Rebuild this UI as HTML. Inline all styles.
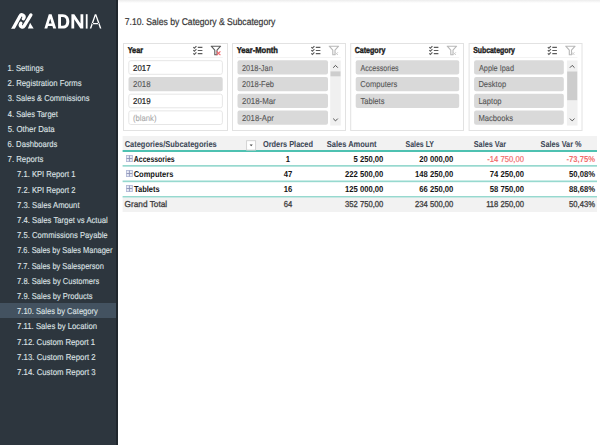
<!DOCTYPE html>
<html><head><meta charset="utf-8"><style>
html,body{margin:0;padding:0;}
body{width:600px;height:445px;overflow:hidden;background:#fff;}
svg{display:block;font-family:"Liberation Sans",sans-serif;text-rendering:geometricPrecision;}
</style></head><body>
<svg width="600" height="445" viewBox="0 0 600 445">
<defs><linearGradient id="tg" x1="0" y1="0" x2="0" y2="1"><stop offset="0" stop-color="#ececec"/><stop offset="1" stop-color="#ffffff"/></linearGradient></defs>
<rect x="118" y="0" width="482" height="3" fill="url(#tg)" />
<rect x="0" y="0" width="116" height="445" fill="#2d363e" />
<rect x="116" y="0" width="2" height="445" fill="#20272d" />
<rect x="0" y="303" width="116" height="15" fill="#435260" />
<clipPath id="lc1"><rect x="0" y="0" width="40" height="28.8"/></clipPath>
<g fill="none" stroke="#ffffff" stroke-width="3.3" stroke-linecap="round"><path clip-path="url(#lc1)" d="M11.77 31 L20.06 16.04 A2.11 2.11 0 0 1 23.76 18.08 L23.4 18.8"/><path d="M20.9 23.2 L20.53 23.92 A2.11 2.11 0 0 0 24.22 25.96 L30.9 14.95"/></g>
<path d="M30.1 22.7 L33.6 28.6 L27.9 28.6 Z" fill="#ffffff"/>
<g fill="#ffffff" fill-rule="evenodd">
<path d="M44.4 28.6 L48.8 14.2 L51.6 14.2 L56.2 28.6 L53.2 28.6 L52.4 26 L48 26 L47.3 28.6 Z M48.7 23.4 L51.6 23.4 L50.2 18.8 Z"/>
<path d="M58.1 14.2 L62.6 14.2 C66.9 14.2 69.3 17.1 69.3 21.4 C69.3 25.7 66.9 28.6 62.6 28.6 L58.1 28.6 Z M61 17 L62.6 17 C65.1 17 66.3 18.8 66.3 21.4 C66.3 24 65.1 25.8 62.6 25.8 L61 25.8 Z"/>
<path d="M71.4 28.6 L71.4 14.2 L74.3 14.2 L80.5 23.6 L80.5 14.2 L83.3 14.2 L83.3 28.6 L80.4 28.6 L74.2 19.2 L74.2 28.6 Z"/>
<rect x="85.8" y="14.2" width="1.8" height="14.4"/>
<path d="M89.8 28.6 L94.8 14.2 L96.3 14.2 L101.4 28.6 L99.9 28.6 L95.55 15.9 L91.3 28.6 Z M92.1 23 L98.9 23 L98.9 24.2 L92.1 24.2 Z"/>
</g>
<text x="7.43" y="71" font-size="8.6" fill="#dfe2e5" stroke="#dfe2e5" stroke-width="0.12" textLength="36.04" lengthAdjust="spacingAndGlyphs">1. Settings</text>
<text x="7.61" y="86" font-size="8.6" fill="#dfe2e5" stroke="#dfe2e5" stroke-width="0.12" textLength="74.05" lengthAdjust="spacingAndGlyphs">2. Registration Forms</text>
<text x="7.70" y="101" font-size="8.6" fill="#dfe2e5" stroke="#dfe2e5" stroke-width="0.12" textLength="81.78" lengthAdjust="spacingAndGlyphs">3. Sales &amp; Commissions</text>
<text x="7.81" y="117" font-size="8.6" fill="#dfe2e5" stroke="#dfe2e5" stroke-width="0.12" textLength="50.04" lengthAdjust="spacingAndGlyphs">4. Sales Target</text>
<text x="7.69" y="132" font-size="8.6" fill="#dfe2e5" stroke="#dfe2e5" stroke-width="0.12" textLength="47.04" lengthAdjust="spacingAndGlyphs">5. Other Data</text>
<text x="7.62" y="147" font-size="8.6" fill="#dfe2e5" stroke="#dfe2e5" stroke-width="0.12" textLength="49.74" lengthAdjust="spacingAndGlyphs">6. Dashboards</text>
<text x="7.61" y="162" font-size="8.6" fill="#dfe2e5" stroke="#dfe2e5" stroke-width="0.12" textLength="35.85" lengthAdjust="spacingAndGlyphs">7. Reports</text>
<text x="17.12" y="177" font-size="8.6" fill="#dfe2e5" stroke="#dfe2e5" stroke-width="0.12" textLength="58.27" lengthAdjust="spacingAndGlyphs">7.1. KPI Report 1</text>
<text x="17.12" y="193" font-size="8.6" fill="#dfe2e5" stroke="#dfe2e5" stroke-width="0.12" textLength="58.27" lengthAdjust="spacingAndGlyphs">7.2. KPI Report 2</text>
<text x="17.12" y="208" font-size="8.6" fill="#dfe2e5" stroke="#dfe2e5" stroke-width="0.12" textLength="62.43" lengthAdjust="spacingAndGlyphs">7.3. Sales Amount</text>
<text x="17.11" y="223" font-size="8.6" fill="#dfe2e5" stroke="#dfe2e5" stroke-width="0.12" textLength="90.70" lengthAdjust="spacingAndGlyphs">7.4. Sales Target vs Actual</text>
<text x="17.12" y="238" font-size="8.6" fill="#dfe2e5" stroke="#dfe2e5" stroke-width="0.12" textLength="90.52" lengthAdjust="spacingAndGlyphs">7.5. Commissions Payable</text>
<text x="17.13" y="253" font-size="8.6" fill="#dfe2e5" stroke="#dfe2e5" stroke-width="0.12" textLength="95.33" lengthAdjust="spacingAndGlyphs">7.6. Sales by Sales Manager</text>
<text x="17.13" y="269" font-size="8.6" fill="#dfe2e5" stroke="#dfe2e5" stroke-width="0.12" textLength="86.68" lengthAdjust="spacingAndGlyphs">7.7. Sales by Salesperson</text>
<text x="17.12" y="284" font-size="8.6" fill="#dfe2e5" stroke="#dfe2e5" stroke-width="0.12" textLength="82.13" lengthAdjust="spacingAndGlyphs">7.8. Sales by Customers</text>
<text x="17.12" y="299" font-size="8.6" fill="#dfe2e5" stroke="#dfe2e5" stroke-width="0.12" textLength="75.45" lengthAdjust="spacingAndGlyphs">7.9. Sales by Products</text>
<text x="17.12" y="314" font-size="8.6" fill="#dfe2e5" stroke="#dfe2e5" stroke-width="0.12" textLength="80.70" lengthAdjust="spacingAndGlyphs">7.10. Sales by Category</text>
<text x="17.11" y="329" font-size="8.6" fill="#dfe2e5" stroke="#dfe2e5" stroke-width="0.12" textLength="79.91" lengthAdjust="spacingAndGlyphs">7.11. Sales by Location</text>
<text x="17.11" y="345" font-size="8.6" fill="#dfe2e5" stroke="#dfe2e5" stroke-width="0.12" textLength="78.08" lengthAdjust="spacingAndGlyphs">7.12. Custom Report 1</text>
<text x="17.11" y="360" font-size="8.6" fill="#dfe2e5" stroke="#dfe2e5" stroke-width="0.12" textLength="78.59" lengthAdjust="spacingAndGlyphs">7.13. Custom Report 2</text>
<text x="17.11" y="375" font-size="8.6" fill="#dfe2e5" stroke="#dfe2e5" stroke-width="0.12" textLength="78.55" lengthAdjust="spacingAndGlyphs">7.14. Custom Report 3</text>
<text x="124.77" y="25" font-size="9.8" fill="#383838" stroke="#383838" stroke-width="0.22" textLength="150.58" lengthAdjust="spacingAndGlyphs">7.10. Sales by Category &amp; Subcategory</text>
<rect x="123.5" y="43.5" width="104" height="87" fill="#ffffff" stroke="#e2e2e2" stroke-width="1"/>
<text x="127.65" y="53" font-size="8.6" fill="#1c1c1c" font-weight="bold" stroke="#1c1c1c" stroke-width="0.4" textLength="15.44" lengthAdjust="spacingAndGlyphs">Year</text>
<rect x="128" y="57" width="94.69999999999999" height="1" fill="#f3f3f3" />
<g transform="translate(192.8,45.8)" fill="none" stroke="#5c5c5c">
<path d="M0.5 1.3 L1.6 2.4 L3.6 0.3 M0.5 4.4 L1.6 5.5 L3.6 3.4 M0.5 7.5 L1.6 8.6 L3.6 6.5" stroke-width="1.1"/>
<path d="M5 1.6 H9.6 M5 4.7 H9.6 M5 7.8 H9.6" stroke-width="1.1"/>
</g>
<g transform="translate(210.6,45.6)">
<path d="M0.6 0.6 H10 L6.4 4.6 V9.2 H4.2 V4.6 Z" fill="none" stroke="#5a5a5a" stroke-width="1.1" stroke-linejoin="round"/>
<path d="M6.0 5.8 L9.8 9.6 M9.8 5.8 L6.0 9.6" stroke="#f0646a" stroke-width="1.1"/></g>
<rect x="128.8" y="60.699999999999996" width="93.6" height="13.6" fill="#ffffff" rx="2" stroke="#e3e3e3" stroke-width="0.9"/>
<text x="133.00" y="71" font-size="8.6" fill="#262626" stroke="#262626" stroke-width="0.22" textLength="17.59" lengthAdjust="spacingAndGlyphs">2017</text>
<rect x="128.5" y="77.03" width="94.19999999999999" height="14.3" fill="#d9d9d9" rx="2"/>
<text x="133.01" y="87" font-size="8.6" fill="#555555" stroke="#555555" stroke-width="0.1" textLength="17.51" lengthAdjust="spacingAndGlyphs">2018</text>
<rect x="128.8" y="94.16" width="93.6" height="13.6" fill="#ffffff" rx="2" stroke="#e3e3e3" stroke-width="0.9"/>
<text x="133.01" y="104" font-size="8.6" fill="#262626" stroke="#262626" stroke-width="0.22" textLength="17.55" lengthAdjust="spacingAndGlyphs">2019</text>
<rect x="128.8" y="110.89" width="93.6" height="13.6" fill="#ffffff" rx="2" stroke="#e3e3e3" stroke-width="0.9"/>
<text x="132.94" y="121" font-size="8.6" fill="#a9a9a9" stroke="#a9a9a9" stroke-width="0.1" textLength="23.54" lengthAdjust="spacingAndGlyphs">(blank)</text>
<rect x="232.5" y="43.5" width="113" height="87" fill="#ffffff" stroke="#e2e2e2" stroke-width="1"/>
<text x="236.65" y="53" font-size="8.6" fill="#1c1c1c" font-weight="bold" stroke="#1c1c1c" stroke-width="0.4" textLength="41.31" lengthAdjust="spacingAndGlyphs">Year-Month</text>
<rect x="237" y="57" width="103.69999999999999" height="1" fill="#f3f3f3" />
<g transform="translate(310.8,45.8)" fill="none" stroke="#5c5c5c">
<path d="M0.5 1.3 L1.6 2.4 L3.6 0.3 M0.5 4.4 L1.6 5.5 L3.6 3.4 M0.5 7.5 L1.6 8.6 L3.6 6.5" stroke-width="1.1"/>
<path d="M5 1.6 H9.6 M5 4.7 H9.6 M5 7.8 H9.6" stroke-width="1.1"/>
</g>
<g transform="translate(328.6,45.6)">
<path d="M0.6 0.6 H10 L6.4 4.6 V9.2 H4.2 V4.6 Z" fill="none" stroke="#b8b8b8" stroke-width="1.1" stroke-linejoin="round"/>
<path d="M6.6 6.6 L9.4 9.4 M9.4 6.6 L6.6 9.4" stroke="#c9c9c9" stroke-width="0.9"/></g>
<rect x="237.5" y="60.3" width="90.5" height="14.3" fill="#d9d9d9" rx="2"/>
<text x="242.03" y="71" font-size="8.6" fill="#555555" stroke="#555555" stroke-width="0.1" textLength="30.75" lengthAdjust="spacingAndGlyphs">2018-Jan</text>
<rect x="237.5" y="77.03" width="90.5" height="14.3" fill="#d9d9d9" rx="2"/>
<text x="242.03" y="87" font-size="8.6" fill="#555555" stroke="#555555" stroke-width="0.1" textLength="31.98" lengthAdjust="spacingAndGlyphs">2018-Feb</text>
<rect x="237.5" y="93.75999999999999" width="90.5" height="14.3" fill="#d9d9d9" rx="2"/>
<text x="242.01" y="104" font-size="8.6" fill="#555555" stroke="#555555" stroke-width="0.1" textLength="33.75" lengthAdjust="spacingAndGlyphs">2018-Mar</text>
<rect x="237.5" y="110.49" width="90.5" height="14.3" fill="#d9d9d9" rx="2"/>
<text x="242.01" y="121" font-size="8.6" fill="#555555" stroke="#555555" stroke-width="0.1" textLength="31.83" lengthAdjust="spacingAndGlyphs">2018-Apr</text>
<rect x="330.2" y="60.5" width="10.6" height="65" fill="#f0f0f0" />
<rect x="330.5" y="71.4" width="10" height="4.8999999999999915" fill="#cdcdcd" />
<path d="M333.2 67.7 L335.5 65.4 L337.8 67.7 M333.2 118.6 L335.5 120.9 L337.8 118.6" fill="none" stroke="#505050" stroke-width="1"/>
<rect x="350.7" y="43.5" width="112.80000000000001" height="87" fill="#ffffff" stroke="#e2e2e2" stroke-width="1"/>
<text x="354.72" y="53" font-size="8.6" fill="#1c1c1c" font-weight="bold" stroke="#1c1c1c" stroke-width="0.4" textLength="30.62" lengthAdjust="spacingAndGlyphs">Category</text>
<rect x="355.2" y="57" width="104.0" height="1" fill="#f3f3f3" />
<g transform="translate(428.8,45.8)" fill="none" stroke="#5c5c5c">
<path d="M0.5 1.3 L1.6 2.4 L3.6 0.3 M0.5 4.4 L1.6 5.5 L3.6 3.4 M0.5 7.5 L1.6 8.6 L3.6 6.5" stroke-width="1.1"/>
<path d="M5 1.6 H9.6 M5 4.7 H9.6 M5 7.8 H9.6" stroke-width="1.1"/>
</g>
<g transform="translate(446.6,45.6)">
<path d="M0.6 0.6 H10 L6.4 4.6 V9.2 H4.2 V4.6 Z" fill="none" stroke="#b8b8b8" stroke-width="1.1" stroke-linejoin="round"/>
<path d="M6.6 6.6 L9.4 9.4 M9.4 6.6 L6.6 9.4" stroke="#c9c9c9" stroke-width="0.9"/></g>
<rect x="355.7" y="60.3" width="103.5" height="14.3" fill="#d9d9d9" rx="2"/>
<text x="360.56" y="71" font-size="8.6" fill="#555555" stroke="#555555" stroke-width="0.1" textLength="38.09" lengthAdjust="spacingAndGlyphs">Accessories</text>
<rect x="355.7" y="77.03" width="103.5" height="14.3" fill="#d9d9d9" rx="2"/>
<text x="360.22" y="87" font-size="8.6" fill="#555555" stroke="#555555" stroke-width="0.1" textLength="37.15" lengthAdjust="spacingAndGlyphs">Computers</text>
<rect x="355.7" y="93.75999999999999" width="103.5" height="14.3" fill="#d9d9d9" rx="2"/>
<text x="360.41" y="104" font-size="8.6" fill="#555555" stroke="#555555" stroke-width="0.1" textLength="24.04" lengthAdjust="spacingAndGlyphs">Tablets</text>
<rect x="469.1" y="43.5" width="112.89999999999998" height="87" fill="#ffffff" stroke="#e2e2e2" stroke-width="1"/>
<text x="473.19" y="53" font-size="8.6" fill="#1c1c1c" font-weight="bold" stroke="#1c1c1c" stroke-width="0.4" textLength="41.76" lengthAdjust="spacingAndGlyphs">Subcategory</text>
<rect x="473.6" y="57" width="103.79999999999995" height="1" fill="#f3f3f3" />
<g transform="translate(547.3,45.8)" fill="none" stroke="#5c5c5c">
<path d="M0.5 1.3 L1.6 2.4 L3.6 0.3 M0.5 4.4 L1.6 5.5 L3.6 3.4 M0.5 7.5 L1.6 8.6 L3.6 6.5" stroke-width="1.1"/>
<path d="M5 1.6 H9.6 M5 4.7 H9.6 M5 7.8 H9.6" stroke-width="1.1"/>
</g>
<g transform="translate(565.1,45.6)">
<path d="M0.6 0.6 H10 L6.4 4.6 V9.2 H4.2 V4.6 Z" fill="none" stroke="#b8b8b8" stroke-width="1.1" stroke-linejoin="round"/>
<path d="M6.6 6.6 L9.4 9.4 M9.4 6.6 L6.6 9.4" stroke="#c9c9c9" stroke-width="0.9"/></g>
<rect x="474.1" y="60.3" width="89.69999999999993" height="14.3" fill="#d9d9d9" rx="2"/>
<text x="478.96" y="71" font-size="8.6" fill="#555555" stroke="#555555" stroke-width="0.1" textLength="35.03" lengthAdjust="spacingAndGlyphs">Apple Ipad</text>
<rect x="474.1" y="77.03" width="89.69999999999993" height="14.3" fill="#d9d9d9" rx="2"/>
<text x="478.40" y="87" font-size="8.6" fill="#555555" stroke="#555555" stroke-width="0.1" textLength="27.73" lengthAdjust="spacingAndGlyphs">Desktop</text>
<rect x="474.1" y="93.75999999999999" width="89.69999999999993" height="14.3" fill="#d9d9d9" rx="2"/>
<text x="478.39" y="104" font-size="8.6" fill="#555555" stroke="#555555" stroke-width="0.1" textLength="23.20" lengthAdjust="spacingAndGlyphs">Laptop</text>
<rect x="474.1" y="110.49" width="89.69999999999993" height="14.3" fill="#d9d9d9" rx="2"/>
<text x="478.39" y="121" font-size="8.6" fill="#555555" stroke="#555555" stroke-width="0.1" textLength="34.76" lengthAdjust="spacingAndGlyphs">Macbooks</text>
<rect x="566.9" y="60.5" width="10.6" height="65" fill="#f0f0f0" />
<rect x="567.1999999999999" y="71.5" width="10" height="28.700000000000003" fill="#cdcdcd" />
<path d="M569.9 67.7 L572.1999999999999 65.4 L574.5 67.7 M569.9 118.6 L572.1999999999999 120.9 L574.5 118.6" fill="none" stroke="#505050" stroke-width="1"/>
<rect x="122.6" y="136" width="474.4" height="14" fill="#f2f2f2" />
<rect x="122.6" y="150" width="474.4" height="2" fill="#4ec1b1" />
<rect x="122.6" y="165" width="474.4" height="1.7" fill="#97d9cf" />
<rect x="122.6" y="180.5" width="474.4" height="1.7" fill="#97d9cf" />
<rect x="122.6" y="196" width="474.4" height="1.7" fill="#97d9cf" />
<rect x="122.6" y="197.7" width="474.4" height="14.3" fill="#f2f2f2" />
<rect x="246.6" y="140.7" width="9" height="9.4" fill="#ffffff" stroke="#cfcfcf" stroke-width="0.9"/>
<path d="M249.6 144.6 L252.8 144.6 L251.2 146.3 Z" fill="#4a4a4a"/>
<text x="124.70" y="147" font-size="8.6" fill="#3c4756" font-weight="bold" stroke="#3c4756" stroke-width="0.05" textLength="92.02" lengthAdjust="spacingAndGlyphs">Categories/Subcategories</text>
<text x="262.90" y="147" font-size="8.6" fill="#3c4756" font-weight="bold" stroke="#3c4756" stroke-width="0.05" textLength="50.09" lengthAdjust="spacingAndGlyphs">Orders Placed</text>
<text x="326.78" y="147" font-size="8.6" fill="#3c4756" font-weight="bold" stroke="#3c4756" stroke-width="0.05" textLength="49.71" lengthAdjust="spacingAndGlyphs">Sales Amount</text>
<text x="405.59" y="147" font-size="8.6" fill="#3c4756" font-weight="bold" stroke="#3c4756" stroke-width="0.05" textLength="28.33" lengthAdjust="spacingAndGlyphs">Sales LY</text>
<text x="473.78" y="147" font-size="8.6" fill="#3c4756" font-weight="bold" stroke="#3c4756" stroke-width="0.05" textLength="32.31" lengthAdjust="spacingAndGlyphs">Sales Var</text>
<text x="540.58" y="147" font-size="8.6" fill="#3c4756" font-weight="bold" stroke="#3c4756" stroke-width="0.05" textLength="40.90" lengthAdjust="spacingAndGlyphs">Sales Var %</text>
<rect x="126.45" y="155.45" width="5.9" height="6.1" fill="#e9ecf6" stroke="#b3bad6" stroke-width="0.9"/>
<path d="M126.6 158.5 H132.2 M129.4 155.6 V161.4" stroke="#8d94b8" stroke-width="0.9"/>
<text x="133.83" y="162" font-size="8.6" fill="#141414" font-weight="bold" textLength="40.87" lengthAdjust="spacingAndGlyphs">Accessories</text>
<text x="285.72" y="162" font-size="8.6" fill="#141414" font-weight="bold" textLength="4.26" lengthAdjust="spacingAndGlyphs">1</text>
<text x="353.53" y="162" font-size="8.6" fill="#141414" font-weight="bold" textLength="29.79" lengthAdjust="spacingAndGlyphs">5 250,00</text>
<text x="419.25" y="162" font-size="8.6" fill="#141414" font-weight="bold" textLength="34.05" lengthAdjust="spacingAndGlyphs">20 000,00</text>
<text x="487.32" y="162" font-size="8.6" fill="#f26b6b" stroke="#f26b6b" stroke-width="0.2" textLength="36.60" lengthAdjust="spacingAndGlyphs">-14 750,00</text>
<text x="566.48" y="162" font-size="8.6" fill="#f26b6b" font-weight="bold" textLength="28.51" lengthAdjust="spacingAndGlyphs">-73,75%</text>
<rect x="126.45" y="170.45" width="5.9" height="6.1" fill="#e9ecf6" stroke="#b3bad6" stroke-width="0.9"/>
<path d="M126.6 173.5 H132.2 M129.4 170.6 V176.4" stroke="#8d94b8" stroke-width="0.9"/>
<text x="133.70" y="177" font-size="8.6" fill="#141414" font-weight="bold" textLength="39.63" lengthAdjust="spacingAndGlyphs">Computers</text>
<text x="283.87" y="177" font-size="8.6" fill="#141414" font-weight="bold" textLength="8.51" lengthAdjust="spacingAndGlyphs">47</text>
<text x="345.00" y="177" font-size="8.6" fill="#141414" font-weight="bold" textLength="38.31" lengthAdjust="spacingAndGlyphs">222 500,00</text>
<text x="415.00" y="177" font-size="8.6" fill="#141414" font-weight="bold" textLength="38.31" lengthAdjust="spacingAndGlyphs">148 250,00</text>
<text x="489.85" y="177" font-size="8.6" fill="#141414" font-weight="bold" textLength="34.05" lengthAdjust="spacingAndGlyphs">74 250,00</text>
<text x="569.01" y="177" font-size="8.6" fill="#141414" font-weight="bold" textLength="25.96" lengthAdjust="spacingAndGlyphs">50,08%</text>
<rect x="126.45" y="185.45" width="5.9" height="6.1" fill="#e9ecf6" stroke="#b3bad6" stroke-width="0.9"/>
<path d="M126.6 188.5 H132.2 M129.4 185.6 V191.4" stroke="#8d94b8" stroke-width="0.9"/>
<text x="133.92" y="192" font-size="8.6" fill="#141414" font-weight="bold" textLength="25.79" lengthAdjust="spacingAndGlyphs">Tablets</text>
<text x="283.64" y="192" font-size="8.6" fill="#141414" font-weight="bold" textLength="8.51" lengthAdjust="spacingAndGlyphs">16</text>
<text x="345.00" y="192" font-size="8.6" fill="#141414" font-weight="bold" textLength="38.31" lengthAdjust="spacingAndGlyphs">125 000,00</text>
<text x="419.25" y="192" font-size="8.6" fill="#141414" font-weight="bold" textLength="34.05" lengthAdjust="spacingAndGlyphs">66 250,00</text>
<text x="489.85" y="192" font-size="8.6" fill="#141414" font-weight="bold" textLength="34.05" lengthAdjust="spacingAndGlyphs">58 750,00</text>
<text x="569.01" y="192" font-size="8.6" fill="#141414" font-weight="bold" textLength="25.96" lengthAdjust="spacingAndGlyphs">88,68%</text>
<text x="124.59" y="207" font-size="8.6" fill="#3f3f3f" stroke="#3f3f3f" stroke-width="0.3" textLength="42.56" lengthAdjust="spacingAndGlyphs">Grand Total</text>
<text x="283.68" y="207" font-size="8.6" fill="#3f3f3f" stroke="#3f3f3f" stroke-width="0.3" textLength="8.51" lengthAdjust="spacingAndGlyphs">64</text>
<text x="345.00" y="207" font-size="8.6" fill="#3f3f3f" stroke="#3f3f3f" stroke-width="0.3" textLength="38.31" lengthAdjust="spacingAndGlyphs">352 750,00</text>
<text x="415.00" y="207" font-size="8.6" fill="#3f3f3f" stroke="#3f3f3f" stroke-width="0.3" textLength="38.31" lengthAdjust="spacingAndGlyphs">234 500,00</text>
<text x="486.17" y="207" font-size="8.6" fill="#3f3f3f" stroke="#3f3f3f" stroke-width="0.3" textLength="37.74" lengthAdjust="spacingAndGlyphs">118 250,00</text>
<text x="569.08" y="207" font-size="8.6" fill="#3f3f3f" stroke="#3f3f3f" stroke-width="0.3" textLength="25.96" lengthAdjust="spacingAndGlyphs">50,43%</text>
</svg>
</body></html>
